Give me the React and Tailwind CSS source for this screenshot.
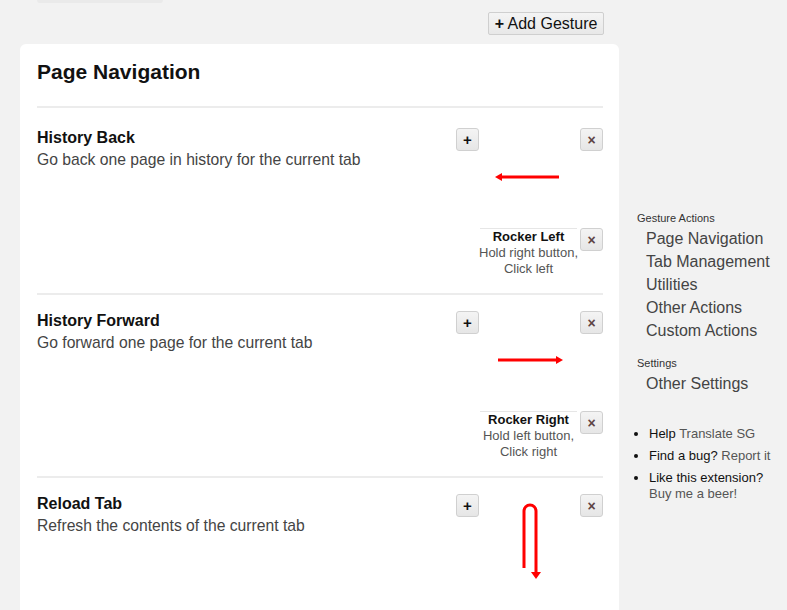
import React from "react";

const gestures = [
  {
    title: "History Back",
    desc: "Go back one page in history for the current tab",
    arrow: "left",
    rocker: { name: "Rocker Left", lines: ["Hold right button,", "Click left"] },
  },
  {
    title: "History Forward",
    desc: "Go forward one page for the current tab",
    arrow: "right",
    rocker: { name: "Rocker Right", lines: ["Hold left button,", "Click right"] },
  },
  {
    title: "Reload Tab",
    desc: "Refresh the contents of the current tab",
    arrow: "uturn",
  },
];

function SmallButton({ children }) {
  return (
    <button className="w-[23px] h-[23px] shrink-0 flex items-center justify-center rounded-[3px] border border-[#d0d0d0] bg-gradient-to-b from-[#f4f4f4] to-[#e6e6e6]">
      {children}
    </button>
  );
}

function Arrow({ kind }) {
  // canvas is 97x100, red strokes
  if (kind === "left") {
    return (
      <svg width="97" height="100" viewBox="0 0 97 100">
        <line x1="79" y1="49" x2="21" y2="49" stroke="#ff0000" strokeWidth="3" />
        <polygon points="15,49 22,45 22,53" fill="#ff0000" />
      </svg>
    );
  }
  if (kind === "right") {
    return (
      <svg width="97" height="100" viewBox="0 0 97 100">
        <line x1="18" y1="49" x2="77" y2="49" stroke="#ff0000" strokeWidth="3" />
        <polygon points="83,49 76,45 76,53" fill="#ff0000" />
      </svg>
    );
  }
  return (
    <svg width="97" height="100" viewBox="0 0 97 100">
      <path
        d="M44 74 L44 17 A6 6 0 0 1 56 17 L56 79"
        fill="none"
        stroke="#ff0000"
        strokeWidth="3"
      />
      <polygon points="56,85 51,78 61,78" fill="#ff0000" />
    </svg>
  );
}

function CloseBtn() {
  return (
    <SmallButton>
      <span className="text-[14px] font-bold leading-none text-[#5e4444]">×</span>
    </SmallButton>
  );
}

function Gesture({ g, first, last }) {
  return (
    <div
      className={
        "flex " +
        (first ? "pt-[20px] " : "pt-[16px] ") +
        (last ? "pb-[40px]" : "pb-[16px] border-b-2 border-[#ececec]")
      }
    >
      <div className="flex-1 pt-[1px]">
        <div className="text-[16px] leading-[18px] font-bold text-[#111]">{g.title}</div>
        <div className="mt-[3px] text-[15.7px] leading-[20px] text-[#444]">{g.desc}</div>
      </div>
      <div className="w-[147px] flex flex-col">
        <div className="flex items-start">
          <SmallButton>
            <span className="text-[15px] font-bold leading-none text-[#111]">+</span>
          </SmallButton>
          <div className="w-[97px] h-[100px] shrink-0 mx-[1px]">
            <Arrow kind={g.arrow} />
          </div>
          <div className="ml-[2px]">
            <CloseBtn />
          </div>
        </div>
        {g.rocker && (
          <div className="flex items-start">
            <div className="w-[23px] shrink-0" />
            <div className="w-[97px] shrink-0 mx-[1px] border-t border-[#e6e6e6] flex flex-col items-center text-[13px] leading-[16px] whitespace-nowrap">
              <div className="font-bold text-[#111]">{g.rocker.name}</div>
              {g.rocker.lines.map((l) => (
                <div key={l} className="text-[#555]">{l}</div>
              ))}
            </div>
            <div className="ml-[2px]">
              <CloseBtn />
            </div>
          </div>
        )}
      </div>
    </div>
  );
}

export default function App() {
  return (
    <div className="min-h-screen bg-[#f2f2f2] font-['Liberation_Sans',Arial,sans-serif] flex">
      {/* main column */}
      <div className="ml-[20px] w-[599px] shrink-0">
        <div className="ml-[17px] w-[126px] h-[3px] bg-[#eaeaea] rounded-b-[3px]" />
        <div className="flex justify-end pr-[15px] pt-[9px]">
          <button className="h-[23px] w-[116px] rounded-[2px] border border-[#cfcfcf] bg-gradient-to-b from-[#f4f4f4] to-[#e8e8e8] text-[16px] leading-none text-[#111]">
            <span className="font-bold">+</span> Add Gesture
          </button>
        </div>
        <div className="mt-[9px] bg-white rounded-t-[6px] pl-[17px] pr-[16px]">
          <div className="pt-[16px] pb-[22px] border-b-2 border-[#ececec]">
            <h1 className="text-[21px] leading-[24px] font-bold text-[#111]">Page Navigation</h1>
          </div>
          {gestures.map((g, i) => (
            <Gesture key={g.title} g={g} first={i === 0} last={i === gestures.length - 1} />
          ))}
        </div>
      </div>

      {/* sidebar */}
      <div className="ml-[18px] pt-[212px] text-[#444]">
        <div className="text-[11px] leading-[13px] text-[#333]">Gesture Actions</div>
        <div className="ml-[9px] mt-[2px] text-[16px] leading-[23px]">
          <div>Page Navigation</div>
          <div>Tab Management</div>
          <div>Utilities</div>
          <div>Other Actions</div>
          <div>Custom Actions</div>
        </div>
        <div className="mt-[15px] text-[11px] leading-[13px] text-[#333]">Settings</div>
        <div className="ml-[9px] mt-[2px] text-[16px] leading-[23px]">Other Settings</div>
        <ul className="mt-[31px] pl-[12px] list-disc text-[13px] leading-[16px] text-[#111]">
          <li className="mb-[6px]">
            Help <span className="text-[#555]">Translate SG</span>
          </li>
          <li className="mb-[6px]">
            Find a bug? <span className="text-[#555]">Report it</span>
          </li>
          <li>
            Like this extension?
            <br />
            <span className="text-[#555]">Buy me a beer!</span>
          </li>
        </ul>
      </div>
    </div>
  );
}
